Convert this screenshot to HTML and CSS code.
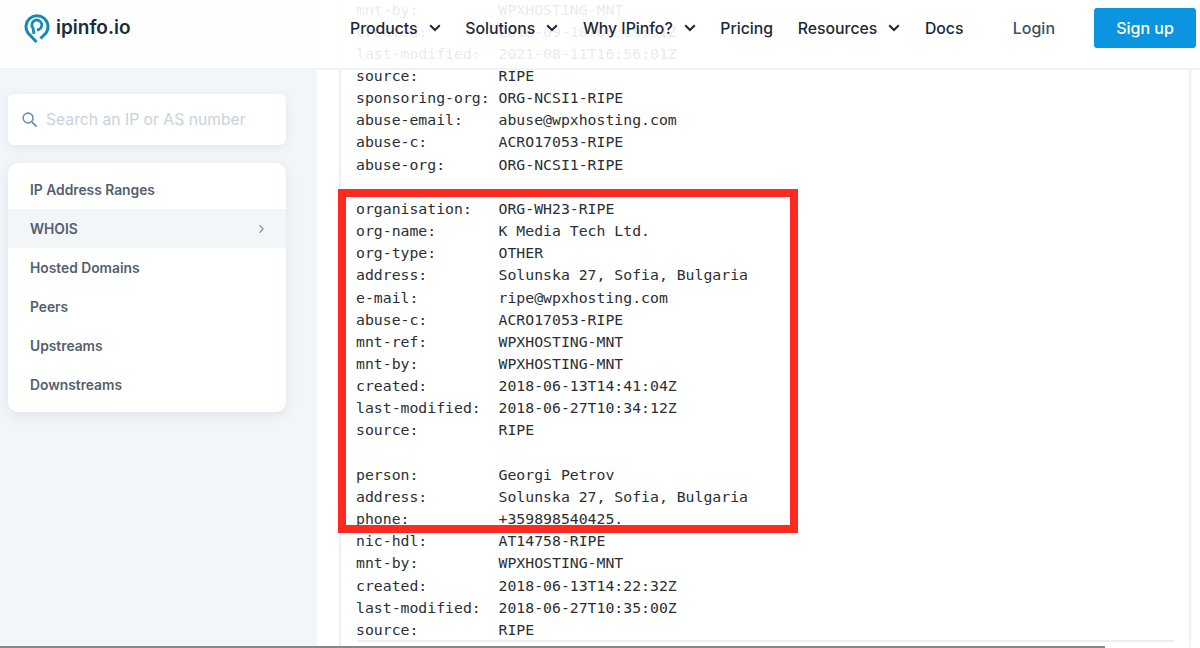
FILE: index.html
```html
<!DOCTYPE html>
<html lang="en">
<head>
<meta charset="utf-8">
<title>ipinfo.io WHOIS</title>
<link rel="stylesheet" href="styles.css">
</head>
<body>
<header class="topbar">
  <a class="brand">
    <svg class="brand-icon" viewBox="0 0 26 32" width="26" height="32"><path d="M12.500 30 3.800 20.800A11 11 0 1 1 22.200 20.800L16.500 26.500" fill="none" stroke="#1489b8" stroke-width="3"/><path d="M10 22 9 16.200A5 5 0 1 1 13 18" fill="none" stroke="#1489b8" stroke-width="2.800"/></svg>
    <span class="brand-name">ipinfo.io</span>
  </a>
  <nav class="nav">
    <a class="nav-item">Products <svg class="chev" viewBox="0 0 12 8" width="12" height="8"><path d="M1.200 1.200 6 6l4.800-4.800" fill="none" stroke="currentColor" stroke-width="2"/></svg></a>
    <a class="nav-item">Solutions <svg class="chev" viewBox="0 0 12 8" width="12" height="8"><path d="M1.200 1.200 6 6l4.800-4.800" fill="none" stroke="currentColor" stroke-width="2"/></svg></a>
    <a class="nav-item">Why IPinfo? <svg class="chev" viewBox="0 0 12 8" width="12" height="8"><path d="M1.200 1.200 6 6l4.800-4.800" fill="none" stroke="currentColor" stroke-width="2"/></svg></a>
    <a class="nav-item">Pricing</a>
    <a class="nav-item">Resources <svg class="chev" viewBox="0 0 12 8" width="12" height="8"><path d="M1.200 1.200 6 6l4.800-4.800" fill="none" stroke="currentColor" stroke-width="2"/></svg></a>
    <a class="nav-item">Docs</a>
  </nav>
  <a class="login">Login</a>
  <a class="signup">Sign up</a>
</header>
<div class="layout">
  <aside class="sidebar">
    <div class="search">
      <svg viewBox="0 0 18 18" width="17" height="17"><circle cx="7.500" cy="7.500" r="5.200" fill="none" stroke="#6f8ea6" stroke-width="1.700"/><path d="m11.500 11.500 5 5" stroke="#6f8ea6" stroke-width="1.900"/></svg>
      <span class="placeholder">Search an IP or AS number</span>
    </div>
    <ul class="menu">
      <li class="menu-item">IP Address Ranges</li>
      <li class="menu-item active">WHOIS <svg viewBox="0 0 8 12" width="7" height="10"><path d="M1.500 1.500 6 6l-4.500 4.500" fill="none" stroke="#8a949e" stroke-width="1.500"/></svg></li>
      <li class="menu-item">Hosted Domains</li>
      <li class="menu-item">Peers</li>
      <li class="menu-item">Upstreams</li>
      <li class="menu-item">Downstreams</li>
    </ul>
  </aside>
  <main class="content">
    <div class="whois-card">
<pre class="whois">mnt-by:         WPXHOSTING-MNT
created:        2018-09-10T06:19:51Z
last-modified:  2021-08-11T16:56:01Z
source:         RIPE
sponsoring-org: ORG-NCSI1-RIPE
abuse-email:    abuse@wpxhosting.com
abuse-c:        ACRO17053-RIPE
abuse-org:      ORG-NCSI1-RIPE

organisation:   ORG-WH23-RIPE
org-name:       K Media Tech Ltd.
org-type:       OTHER
address:        Solunska 27, Sofia, Bulgaria
e-mail:         ripe@wpxhosting.com
abuse-c:        ACRO17053-RIPE
mnt-ref:        WPXHOSTING-MNT
mnt-by:         WPXHOSTING-MNT
created:        2018-06-13T14:41:04Z
last-modified:  2018-06-27T10:34:12Z
source:         RIPE

person:         Georgi Petrov
address:        Solunska 27, Sofia, Bulgaria
phone:          +359898540425.
nic-hdl:        AT14758-RIPE
mnt-by:         WPXHOSTING-MNT
created:        2018-06-13T14:22:32Z
last-modified:  2018-06-27T10:35:00Z
source:         RIPE</pre>
      <div class="card-rule"></div>
    </div>
    <div class="highlight"></div>
  </main>
</div>
<div class="bottom-line"></div>
</body>
</html>
```
FILE: styles.css
```css
* { box-sizing: border-box; }
html, body { margin: 0; height: 648px; overflow: hidden; background: #fff; }
body { font-family: "Inter", "Liberation Sans", sans-serif; position: relative; }

.topbar {
  position: absolute; top: 0; left: 0; right: 0; height: 70px;
  display: flex; align-items: center; z-index: 3;
  background: rgba(255,255,255,.9);
  border-bottom: 2px solid #f1f3f5;
  padding: 0 4px 0 24px;
}
.brand { display: flex; flex: none; align-items: center; gap: 6px; width: 326px; margin-top: -13px; }
.brand-name { font-size: 19px; font-weight: 600; color: #1c2b3a; }
.nav { display: flex; flex: none; align-items: center; gap: 24.600px; font-size: 15.800px; font-weight: 500; color: #1b2838; margin-top: -12px; }
.nav-item { display: flex; align-items: center; gap: 11px; white-space: nowrap; }
.login { margin: -13px 39px 0 auto; font-size: 16px; font-weight: 500; color: #3d5062; }
.signup {
  flex: none; margin-top: -13px; width: 102px; height: 40px;
  display: flex; align-items: center; justify-content: center;
  background: #0b95e0; color: #fff; border-radius: 3px; font-size: 16px; font-weight: 500;
}

.layout { display: flex; height: 648px; }
.sidebar { width: 317px; flex: none; background: #f3f6f9; padding: 94px 31px 0 8px; }
.search {
  height: 51px; background: #fff; border-radius: 6px;
  box-shadow: 0 3px 12px rgba(60,80,100,.09);
  display: flex; align-items: center; gap: 8px; padding: 0 12px 0 13px;
}
.placeholder { font-size: 15.700px; color: #c8d3db; white-space: nowrap; }
.menu {
  list-style: none; margin: 18px 0 0; padding: 7px 0 8px;
  background: #fff; border-radius: 10px;
  box-shadow: 0 4px 14px rgba(60,80,100,.1);
}
.menu-item {
  height: 39px; display: flex; align-items: center; justify-content: space-between;
  padding: 0 21px 0 22px; font-size: 13.800px; font-weight: 600; color: #545f6c;
}
.menu-item.active { background: #f3f6f9; }

.content { flex: 1; position: relative; padding: 0 9px 0 22px; overflow: hidden; }
.whois-card { height: 648px; border: solid #eef0f2; border-width: 0 2px; padding: 0 0 0 15px; position: relative; }
.whois {
  margin: -1.500px 0 0;
  font-family: "DejaVu Sans Mono", monospace; font-size: 14.800px; line-height: 22.160px; color: #2b2f33;
}
.card-rule { position: absolute; left: 16px; right: 15px; bottom: 5px; height: 2px; background: #eceef0; }
.highlight {
  position: absolute; left: 21px; top: 189px; width: 460px; height: 344px;
  border: 8px solid #ff2a1f; z-index: 2;
}
.bottom-line { position: absolute; left: 0; bottom: 0; width: 1105px; height: 2px; background: #85878a; z-index: 4; }
```
